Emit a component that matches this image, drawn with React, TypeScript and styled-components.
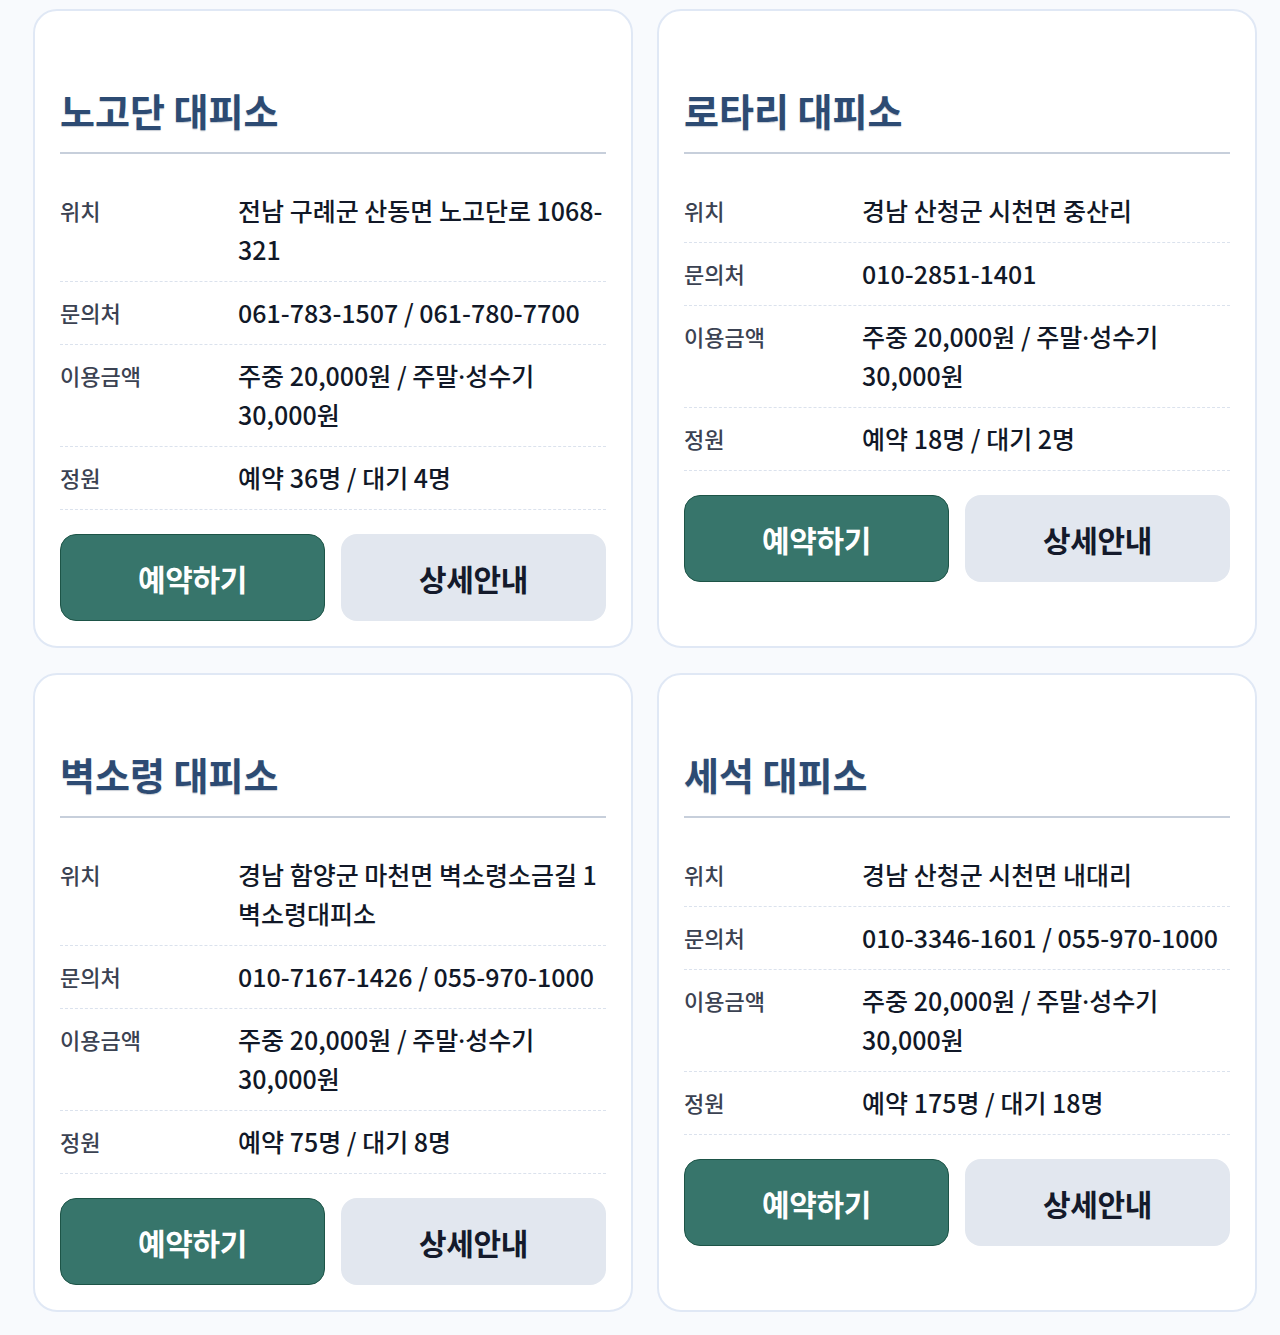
import React from "react";
import styled, { createGlobalStyle } from "styled-components";

const GlobalStyle = createGlobalStyle`
  html, body {
    margin: 0;
    padding: 0;
    background: #f8fafd;
    font-family: "Noto Sans CJK KR", "Noto Sans", sans-serif;
  }
`;

const Page = styled.div`
  padding: 9px 22px 0 33px;
  min-height: 1335px;
  box-sizing: border-box;
`;

const Grid = styled.div`
  display: grid;
  grid-template-columns: 600px 600px;
  column-gap: 24px;
  row-gap: 25px;
`;

const Card = styled.section`
  background: #ffffff;
  border: 2px solid #e0e8f5;
  border-radius: 24px;
  padding: 74px 25px 25px;
  display: flex;
  flex-direction: column;
  box-sizing: border-box;
`;

const Title = styled.h2`
  margin: 0;
  padding-bottom: 17px;
  border-bottom: 2px solid #c7cfdb;
  font-size: 38px;
  line-height: 50px;
  font-weight: 700;
  color: #2d4b73;
  text-shadow: 0 1px 1px rgba(30, 50, 80, 0.25);
`;

const InfoList = styled.dl`
  margin: 26px 0 0;
  padding: 0;
`;

const Row = styled.div`
  display: grid;
  grid-template-columns: 178px 1fr;
  padding: 11px 0 12px;
  border-bottom: 1px dashed #dbe2ed;
`;

const Label = styled.dt`
  margin: 0;
  font-size: 22px;
  line-height: 38px;
  font-weight: 500;
  color: #3b4252;
`;

const Value = styled.dd`
  margin: 0;
  font-size: 25px;
  line-height: 39px;
  font-weight: 500;
  color: #111827;
  word-break: keep-all;
`;

const Dot = styled.span`
  font-family: "Noto Sans", sans-serif;
  line-height: 1;
`;

const Actions = styled.div`
  display: grid;
  grid-template-columns: 1fr 1fr;
  gap: 16px;
  margin-top: 24px;
`;

const Button = styled.button<{ $primary?: boolean }>`
  height: 87px;
  border-radius: 16px;
  font-family: inherit;
  font-size: 30px;
  font-weight: 700;
  letter-spacing: -0.3px;
  cursor: pointer;
  border: ${(p) => (p.$primary ? "1px solid #1d5447" : "none")};
  background: ${(p) => (p.$primary ? "#37756b" : "#e2e7ef")};
  color: ${(p) => (p.$primary ? "#ffffff" : "#141a2b")};
`;

type Info = { label: string; value: string };
type Shelter = { name: string; rows: Info[] };

const shelters: Shelter[] = [
  {
    name: "노고단 대피소",
    rows: [
      { label: "위치", value: "전남 구례군 산동면 노고단로 1068-321" },
      { label: "문의처", value: "061-783-1507 / 061-780-7700" },
      { label: "이용금액", value: "주중 20,000원 / 주말·성수기 30,000원" },
      { label: "정원", value: "예약 36명 / 대기 4명" },
    ],
  },
  {
    name: "로타리 대피소",
    rows: [
      { label: "위치", value: "경남 산청군 시천면 중산리" },
      { label: "문의처", value: "010-2851-1401" },
      { label: "이용금액", value: "주중 20,000원 / 주말·성수기 30,000원" },
      { label: "정원", value: "예약 18명 / 대기 2명" },
    ],
  },
  {
    name: "벽소령 대피소",
    rows: [
      { label: "위치", value: "경남 함양군 마천면 벽소령소금길 1 벽소령대피소" },
      { label: "문의처", value: "010-7167-1426 / 055-970-1000" },
      { label: "이용금액", value: "주중 20,000원 / 주말·성수기 30,000원" },
      { label: "정원", value: "예약 75명 / 대기 8명" },
    ],
  },
  {
    name: "세석 대피소",
    rows: [
      { label: "위치", value: "경남 산청군 시천면 내대리" },
      { label: "문의처", value: "010-3346-1601 / 055-970-1000" },
      { label: "이용금액", value: "주중 20,000원 / 주말·성수기 30,000원" },
      { label: "정원", value: "예약 175명 / 대기 18명" },
    ],
  },
];

function renderValue(v: string) {
  const parts = v.split("·");
  return parts.map((p, i) => (
    <React.Fragment key={i}>
      {i > 0 && <Dot>·</Dot>}
      {p}
    </React.Fragment>
  ));
}

export default function App() {
  return (
    <>
      <GlobalStyle />
      <Page>
        <Grid>
          {shelters.map((s) => (
            <Card key={s.name}>
              <Title>{s.name}</Title>
              <InfoList>
                {s.rows.map((r) => (
                  <Row key={r.label}>
                    <Label>{r.label}</Label>
                    <Value>{renderValue(r.value)}</Value>
                  </Row>
                ))}
              </InfoList>
              <Actions>
                <Button $primary>예약하기</Button>
                <Button>상세안내</Button>
              </Actions>
            </Card>
          ))}
        </Grid>
      </Page>
    </>
  );
}
